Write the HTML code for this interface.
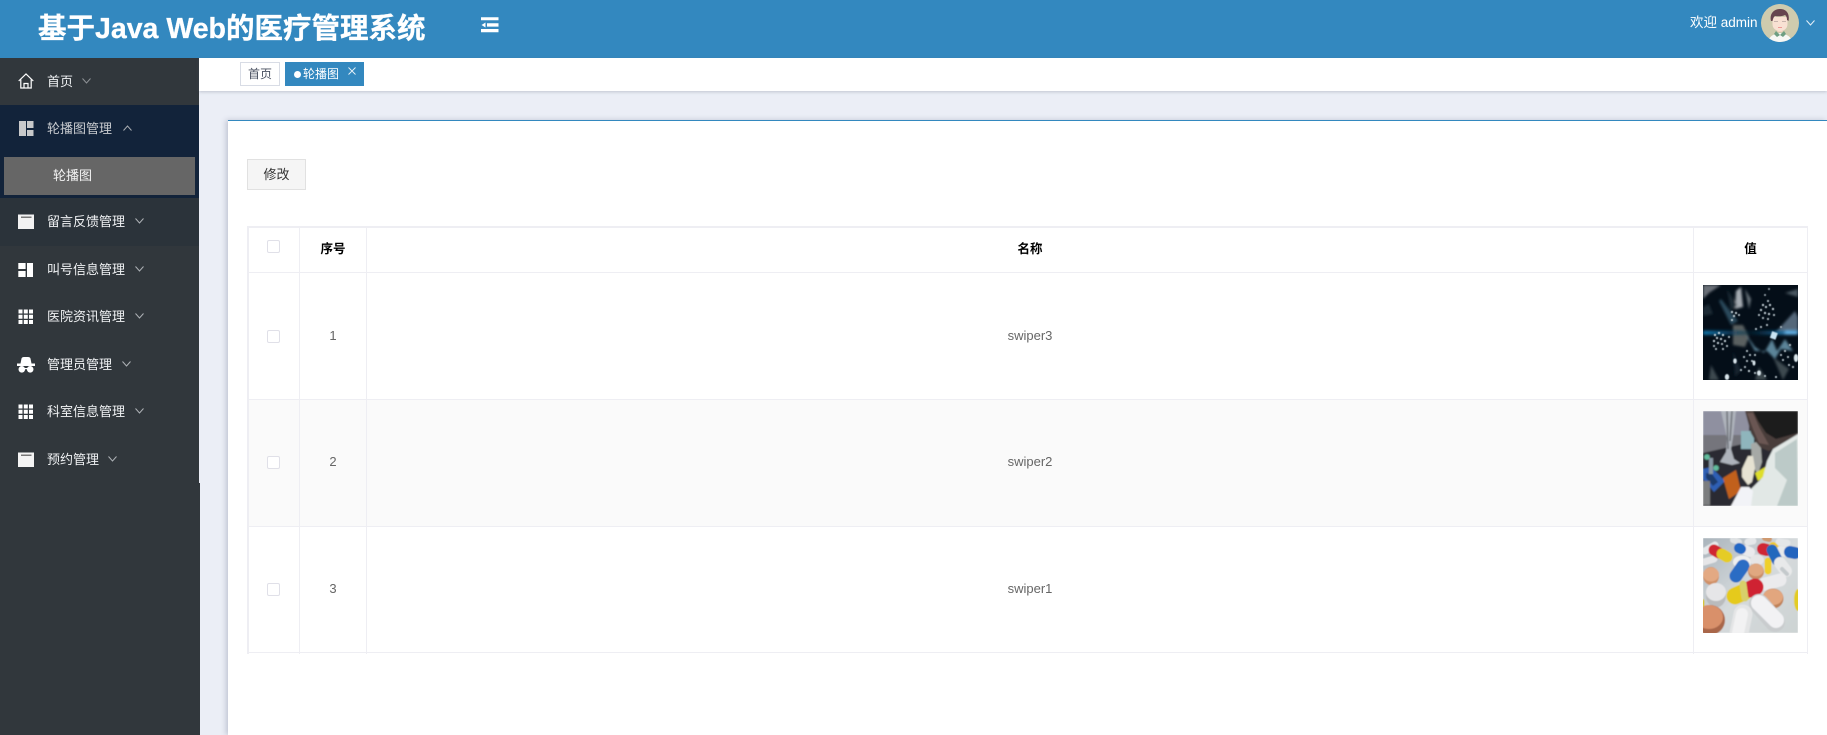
<!DOCTYPE html>
<html lang="zh-CN">
<head>
<meta charset="utf-8">
<title>基于Java Web的医疗管理系统</title>
<style>
*{box-sizing:border-box;margin:0;padding:0}
html,body{width:1827px;height:735px;overflow:hidden;background:#ebeef6;font-family:"Liberation Sans","Noto Sans CJK SC",sans-serif;font-size:13px;position:relative}
.a{position:absolute}
#hd{left:0;top:0;width:1827px;height:58px;background:#3388bf}
#title{left:38px;top:9px;font-size:28.5px;line-height:40px;font-weight:700;color:#fff;white-space:nowrap;-webkit-text-stroke:.3px #fff}
#side{left:0;top:58px;width:199px;height:425px;background:#31373c}
#side2{left:0;top:483px;width:200px;height:252px;background:#31373c}
.m{left:47px;color:#f0f2f4;font-size:13px;line-height:18px;white-space:nowrap}
.ic{left:18px;width:16px;height:16px}
.ar{width:9px;height:6px}
#tabs{left:199px;top:58px;width:1628px;height:33px;background:#fff;box-shadow:0 1px 3px rgba(90,100,120,.3)}
.tab{top:62px;height:24px;line-height:25px;font-size:12px;white-space:nowrap}
#card{left:228px;top:120px;width:1599px;height:615px;background:#fff;border-top:1px solid #3388bf;box-shadow:-2px 0 5px rgba(90,100,130,.3)}
#btn{left:247px;top:159px;width:59px;height:31px;background:#f5f5f5;border:1px solid #e1e1e1;color:#333;line-height:30px;text-align:center;font-size:13px}
.hl{background:#eeeef3}
.cb{left:267px;width:13px;height:13px;border:1px solid #e0e0e8;border-radius:2px;background:#fff}
.th{color:#000;font-weight:700;font-size:12.5px;line-height:18px;text-align:center}
.td{color:#666;font-size:13px;line-height:18px;text-align:center}
</style>
</head>
<body>
<div class="a" id="hd"></div>
<div class="a" id="title">基于Java Web的医疗管理系统</div>
<svg class="a" style="left:481px;top:17px" width="18" height="16" viewBox="0 0 18 16"><path d="M0 .3h17.500v3H0zM0 12h17.500v3.300H0zM6 6.300h11.500v3.300H6z" fill="#fff"/><path d="M.5 8L4.500 5.500v5z" fill="#fff"/></svg>
<div class="a" style="left:1690px;top:14px;color:#fff;font-size:13.5px;line-height:18px;white-space:nowrap">欢迎 admin</div>
<svg class="a" style="left:1761px;top:4px" width="38" height="38" viewBox="0 0 38 38">
<defs><clipPath id="cc"><circle cx="19" cy="19" r="19"/></clipPath></defs>
<g clip-path="url(#cc)"><rect width="38" height="38" fill="#cfcbae"/>
<path d="M7 38c1-6 6-8 12-9 6 1 11 3 12 9z" fill="#f7f7f4"/>
<path d="M15 27l4 4 4-4 2 3-3 3-3-2-3 2-3-3z" fill="#6f9e82"/>
<rect x="16.500" y="22" width="5" height="6" fill="#f4d3c0"/>
<path d="M11.500 13h15v7c0 5-4 7-7.500 7s-7.500-2-7.500-7z" fill="#f9e1d3"/>
<path d="M10 17c-2-8 4-12 9-12 6 0 10 4 8.500 12l-1.500-1c0-2-.5-4-2-5-3 1.500-7 1.500-10 1-1.500 1-2 3-2.500 5z" fill="#66454f"/>
<path d="M13 17.500h4M21 17.500h4" stroke="#c8b4ac" stroke-width="1"/><path d="M17 23.500h4" stroke="#ec9a96" stroke-width="1"/></g></svg>
<svg class="a ar" style="left:1806px;top:20px" viewBox="0 0 9 6"><path d="M.5.5L4.500 5 8.500.5" fill="none" stroke="#e6f0f8" stroke-width="1"/></svg>

<div class="a" id="side"></div><div class="a" id="side2"></div>
<div class="a" style="left:0;top:105px;width:199px;height:93px;background:#12233a"></div>
<div class="a" style="left:0;top:198px;width:199px;height:48px;background:#2b333a"></div>
<div class="a" style="left:4px;top:157px;width:191px;height:38px;background:#666"></div>

<svg class="a ic" style="top:73px" viewBox="0 0 16 16"><path d="M.7 8L8 1l7.300 7M2.800 6.500V15h10.400V6.500M6 15v-4.500h4V15" fill="none" stroke="#fff" stroke-width="1.200"/></svg>
<div class="a m" style="top:73px">首页</div>
<svg class="a ar" style="left:82px;top:78px" viewBox="0 0 9 6"><path d="M.5.5L4.500 5 8.500.5" fill="none" stroke="#8e9296"/></svg>

<svg class="a ic" style="top:121px" viewBox="0 0 16 16"><path d="M1 0h7v15H1zM9 0h6.500v7H9zM9 9h6.500v6H9z" fill="#c8c9ca"/></svg>
<div class="a m" style="top:120px;color:#c9ccd0">轮播图管理</div>
<svg class="a ar" style="left:123px;top:125px" viewBox="0 0 9 6"><path d="M.5 5.500L4.500 1l4 4.500" fill="none" stroke="#a9adb2"/></svg>
<div class="a m" style="left:53px;top:167px;color:#f4f4f4">轮播图</div>

<svg class="a ic" style="top:214px" viewBox="0 0 16 16"><rect width="16.500" height="14.500" y=".5" fill="#f2f2f2"/><rect x="3" y="2.500" width="10.500" height="1.500" fill="#777"/></svg>
<div class="a m" style="top:213px">留言反馈管理</div>
<svg class="a ar" style="left:135px;top:218px" viewBox="0 0 9 6"><path d="M.5.5L4.500 5 8.500.5" fill="none" stroke="#aeb2b6"/></svg>

<svg class="a ic" style="top:263px" viewBox="0 0 16 16"><path d="M.3 0h7.300v6H.3zM.3 8h7.300v6H.3zM9 0h6v14H9z" fill="#fff"/></svg>
<div class="a m" style="top:261px">叫号信息管理</div>
<svg class="a ar" style="left:135px;top:266px" viewBox="0 0 9 6"><path d="M.5.5L4.500 5 8.500.5" fill="none" stroke="#aeb2b6"/></svg>

<svg class="a ic" style="top:309px" viewBox="0 0 16 16"><path d="M.5.500h4v4h-4zM5.800.5h4v4h-4zM11 .5h4v4h-4zM.5 5.700h4v4h-4zM5.800 5.700h4v4h-4zM11 5.700h4v4h-4zM.5 11h4v4h-4zM5.800 11h4v4h-4zM11 11h4v4h-4z" fill="#fff"/></svg>
<div class="a m" style="top:308px">医院资讯管理</div>
<svg class="a ar" style="left:135px;top:313px" viewBox="0 0 9 6"><path d="M.5.5L4.500 5 8.500.5" fill="none" stroke="#aeb2b6"/></svg>

<svg class="a ic" style="top:357px;left:17px;width:18px" viewBox="0 0 18 16"><path d="M3.500 6.500L4.500 1.500Q5 0 7 0h4q2 0 2.500 1.500l1 5zM0 6.500h18V9H0z" fill="#fff"/><circle cx="4.800" cy="12.300" r="3.300" fill="#fff"/><circle cx="13.200" cy="12.300" r="3.300" fill="#fff"/><path d="M7 11h4v1.200H7z" fill="#fff"/></svg>
<div class="a m" style="top:356px">管理员管理</div>
<svg class="a ar" style="left:122px;top:361px" viewBox="0 0 9 6"><path d="M.5.5L4.500 5 8.500.5" fill="none" stroke="#aeb2b6"/></svg>

<svg class="a ic" style="top:404px" viewBox="0 0 16 16"><path d="M.5.500h4v4h-4zM5.800.5h4v4h-4zM11 .5h4v4h-4zM.5 5.700h4v4h-4zM5.800 5.700h4v4h-4zM11 5.700h4v4h-4zM.5 11h4v4h-4zM5.800 11h4v4h-4zM11 11h4v4h-4z" fill="#fff"/></svg>
<div class="a m" style="top:403px">科室信息管理</div>
<svg class="a ar" style="left:135px;top:408px" viewBox="0 0 9 6"><path d="M.5.5L4.500 5 8.500.5" fill="none" stroke="#aeb2b6"/></svg>

<svg class="a ic" style="top:452px" viewBox="0 0 16 16"><rect width="16.500" height="14.500" y=".5" fill="#f4f4f4"/><rect x="3" y="2.500" width="10.500" height="1.500" fill="#777"/></svg>
<div class="a m" style="top:451px">预约管理</div>
<svg class="a ar" style="left:108px;top:456px" viewBox="0 0 9 6"><path d="M.5.5L4.500 5 8.500.5" fill="none" stroke="#aeb2b6"/></svg>

<div class="a" id="tabs"></div>
<div class="a tab" style="left:240px;width:40px;background:#fff;border:1px solid #d8dce5;color:#495060;text-align:center;line-height:23px">首页</div>
<div class="a tab" style="left:285px;width:79px;background:#3388bf;color:#fff;padding-left:9px"><span style="display:inline-block;width:7px;height:7px;border-radius:50%;background:#fff;vertical-align:0;margin-right:2px"></span>轮播图</div>
<svg class="a" style="left:348px;top:67px" width="8" height="8" viewBox="0 0 8 8"><path d="M.5.5l7 7M7.500.5l-7 7" stroke="#e8f2f8" stroke-width=".9"/></svg>

<div class="a" id="card"></div>
<div class="a" id="btn">修改</div>

<div class="a" style="left:249px;top:400px;width:1558px;height:127px;background:#fafafa"></div>
<div class="a hl" style="left:247px;top:226px;width:1561px;height:2px"></div>
<div class="a hl" style="left:247px;top:226px;width:2px;height:428px"></div>
<div class="a hl" style="left:299px;top:226px;width:1px;height:428px"></div>
<div class="a hl" style="left:366px;top:226px;width:1px;height:428px"></div>
<div class="a hl" style="left:1693px;top:226px;width:1px;height:428px"></div>
<div class="a hl" style="left:1807px;top:226px;width:1px;height:428px"></div>
<div class="a hl" style="left:247px;top:272px;width:1561px;height:1px"></div>
<div class="a hl" style="left:247px;top:399px;width:1561px;height:1px"></div>
<div class="a hl" style="left:247px;top:526px;width:1561px;height:1px"></div>
<div class="a hl" style="left:247px;top:652px;width:1561px;height:1px"></div>

<div class="a cb" style="top:240px"></div>
<div class="a cb" style="top:330px"></div>
<div class="a cb" style="top:456px"></div>
<div class="a cb" style="top:583px"></div>

<div class="a th" style="left:300px;top:240px;width:66px">序号</div>
<div class="a th" style="left:367px;top:240px;width:1326px">名称</div>
<div class="a th" style="left:1694px;top:240px;width:113px">值</div>

<div class="a td" style="left:300px;top:327px;width:66px">1</div>
<div class="a td" style="left:367px;top:327px;width:1326px">swiper3</div>
<div class="a td" style="left:300px;top:453px;width:66px">2</div>
<div class="a td" style="left:367px;top:453px;width:1326px">swiper2</div>
<div class="a td" style="left:300px;top:580px;width:66px">3</div>
<div class="a td" style="left:367px;top:580px;width:1326px">swiper1</div>

<!-- image 1 -->
<svg class="a" style="left:1703px;top:285px" width="95" height="95" viewBox="0 0 95 95">
<defs>
<filter id="b1" x="-20%" y="-20%" width="140%" height="140%"><feGaussianBlur stdDeviation=".5"/></filter>
<filter id="b2" x="-20%" y="-20%" width="140%" height="140%"><feGaussianBlur stdDeviation="1.300"/></filter>
<filter id="b5" x="-20%" y="-200%" width="140%" height="500%"><feGaussianBlur stdDeviation="1.500"/></filter>
<linearGradient id="fl" x1="0" x2="1"><stop offset="0" stop-color="#1c90d0"/><stop offset=".2" stop-color="#0c5a88"/><stop offset=".5" stop-color="#06283c" stop-opacity=".5"/><stop offset=".75" stop-color="#0e5a88"/><stop offset="1" stop-color="#49b6ff"/></linearGradient>
</defs>
<rect width="95" height="95" fill="#040e18"/>
<g filter="url(#b2)">
<path d="M0 0h18L6 8 0 14z" fill="#6a7078"/><path d="M33 6l5-4 2 20-8 2z" fill="#a6acb2"/><path d="M42 4l6 10-2 10z" fill="#6a747c"/>
<path d="M0 22l6-3 4 10-10 2z" fill="#1a2a34"/><path d="M82 8l13-4v8z" fill="#4a5660"/><path d="M72 48l20-22 3 6v14z" fill="#55687a"/>
<path d="M16 16l12 24 7-4-17-22z" fill="#2a4a5c"/><path d="M24 4l4 22 6-6z" fill="#1a2a36"/>
<path d="M30 40h10l6 12-4 10-12-2z" fill="#5a6060"/>
<path d="M42 48l10 14 9 6 8-14 5 12 8-12 8 12-12-2-6 10-8-8-12 0z" fill="#5b8499"/>
<path d="M8 80l8 15H6zM56 82l8 13H52zM70 72l16 12-6 11z" fill="#3c4850"/>
<path d="M30 66l8 20-6 6z" fill="#12222e"/>
</g>
<g filter="url(#b5)"><rect x="0" y="46" width="95" height="3.500" fill="url(#fl)"/><rect x="82" y="45.500" width="13" height="4" fill="#6cc4ff"/></g>
<rect x="68" y="47" width="6" height="7" fill="#c9e4f2" filter="url(#b1)" transform="rotate(20 71 50)"/>
<g fill="#d8e4ea" filter="url(#b1)">
<circle cx="12" cy="50" r="1.100"/><circle cx="16" cy="48" r="1.100"/><circle cx="20" cy="50" r="1.100"/><circle cx="14" cy="53" r="1.100"/><circle cx="18" cy="54" r="1.100"/><circle cx="22" cy="56" r="1.100"/><circle cx="11" cy="56" r="1.100"/><circle cx="15" cy="58" r="1.100"/><circle cx="19" cy="59" r="1"/><circle cx="11" cy="61" r="1"/><circle cx="24" cy="61" r="1"/><circle cx="13" cy="64" r="1"/><circle cx="20" cy="64" r="1"/><circle cx="26" cy="52" r="1"/>
<circle cx="29" cy="27" r="1.100"/><circle cx="33" cy="28" r="1.100"/><circle cx="31" cy="31" r="1.100"/><circle cx="36" cy="30" r="1"/><circle cx="29" cy="35" r="1"/>
<circle cx="62" cy="10" r=".9"/><circle cx="66" cy="4" r=".9"/><circle cx="65" cy="16" r="1"/><circle cx="60" cy="20" r="1.100"/><circle cx="63" cy="22" r="1.100"/><circle cx="67" cy="20" r="1.100"/><circle cx="70" cy="24" r="1.100"/><circle cx="58" cy="25" r="1.100"/><circle cx="62" cy="28" r="1.100"/><circle cx="66" cy="29" r="1.100"/><circle cx="71" cy="30" r="1"/><circle cx="60" cy="33" r="1"/><circle cx="65" cy="34" r="1"/><circle cx="56" cy="30" r="1"/><circle cx="53" cy="44" r="1"/><circle cx="58" cy="42" r="1"/><circle cx="64" cy="40" r="1"/><circle cx="78" cy="42" r=".9"/>
<circle cx="44" cy="66" r="1"/><circle cx="47" cy="70" r="1"/><circle cx="41" cy="72" r="1"/><circle cx="52" cy="70" r="1"/><circle cx="44" cy="76" r="1"/><circle cx="49" cy="76" r="1"/><circle cx="42" cy="82" r="1"/><circle cx="46" cy="86" r="1.100"/><circle cx="38" cy="85" r="1"/><circle cx="52" cy="88" r="1"/><circle cx="62" cy="91" r="1"/>
<ellipse cx="32" cy="76" rx="1.800" ry="2.600"/><ellipse cx="51" cy="78" rx="1.500" ry="2.600"/><ellipse cx="56" cy="88" rx="2" ry="2.600"/><ellipse cx="24" cy="92" rx="2.200" ry="3"/><ellipse cx="93" cy="73" rx="2.200" ry="4"/>
<circle cx="78" cy="70" r="1"/><circle cx="82" cy="66" r="1"/><circle cx="85" cy="72" r="1"/><circle cx="80" cy="75" r="1"/><circle cx="87" cy="60" r="1"/><circle cx="86" cy="80" r="1"/><circle cx="73" cy="92" r="1"/><circle cx="90" cy="82" r="1"/>
</g></svg>

<!-- image 2 -->
<svg class="a" style="left:1703px;top:411px" width="95" height="95" viewBox="0 0 95 95">
<defs><filter id="b3" x="-10%" y="-10%" width="120%" height="120%"><feGaussianBlur stdDeviation=".9"/></filter><clipPath id="c2"><rect width="95" height="95"/></clipPath></defs>
<g clip-path="url(#c2)"><g filter="url(#b3)">
<rect width="95" height="95" fill="#2a2c33"/>
<path d="M0 0h46v28L0 42z" fill="#8f90a0"/><path d="M0 24h44v8L0 42z" fill="#74757c"/>
<path d="M18 0h15l-3 26-2 12 3 10 6 4-8 2-12-3 6-10 1-14z" fill="#aeb3bb"/><path d="M24 0l1 38M29 0l-2 30" stroke="#6c6f76" stroke-width="1.500" fill="none"/>
<path d="M38 20h13v18H38z" fill="#8fb5bc"/>
<path d="M42 0h53v23L66 40l-10-4-8-14z" fill="#4a3c3a"/><path d="M50 0h45v22l-22 6-10-6-8-12z" fill="#1f1b1a"/><path d="M44 2l6 16 6 14 10 2-10-18-6-14z" fill="#6a5652"/>
<path d="M48 33l5-2 5 6 1 14-4 12-6-8z" fill="#a6a9a6"/>
<path d="M0 58l8-2 14 14-11 11L0 68z" fill="#2f5fb4"/><path d="M3 62l6 1 6 8-5 4-7-8z" fill="#1d3a6c"/>
<circle cx="4" cy="46" r="2.800" fill="#63bd9e"/><circle cx="13" cy="57" r="2.800" fill="#62bb9c"/><path d="M6 47h4v16H6z" fill="#8a9aa6"/>
<path d="M0 70h7v24H0z" fill="#7c7d7e"/>
<path d="M20 67l13-8 5 21-12 8z" fill="#c1611f"/>
<path d="M52 62l12-7 2 8-11 7z" fill="#dede2c"/>
<path d="M39 58l6-13 5 0 2 12-3 14-4 3-6-8z" fill="#e6e2d2"/>
<path d="M95 23L70 38l-6 12-4 16-12 12-6-2-14 19h67z" fill="#e2e8e6"/><path d="M72 42l22-14 1 67H74l10-26-12-12z" fill="#bccac8"/><path d="M38 76l8 0 4 4-2 15H28z" fill="#f2f3f7"/>
</g></g></svg>

<!-- image 3 -->
<svg class="a" style="left:1703px;top:538px" width="95" height="95" viewBox="0 0 95 95">
<defs><filter id="b4" x="-10%" y="-10%" width="120%" height="120%"><feGaussianBlur stdDeviation=".6"/></filter><linearGradient id="bg3" x1="0" y1="0" x2="1" y2="1"><stop offset="0" stop-color="#aab4bc"/><stop offset=".5" stop-color="#d5dadc"/><stop offset="1" stop-color="#cdd3d3"/></linearGradient><clipPath id="c3"><rect width="95" height="95"/></clipPath></defs>
<g clip-path="url(#c3)"><g filter="url(#b4)" fill="none" stroke-linecap="round">
<rect width="95" height="95" fill="url(#bg3)"/>
<path d="M2 13L12 7" stroke="#e6e8ea" stroke-width="7"/><path d="M1 24L11 21" stroke="#e6e6e8" stroke-width="7"/>
<path d="M45 4L50 3" stroke="#e6e8ea" stroke-width="7"/><path d="M62 0L66 1" stroke="#cf9a70" stroke-width="6"/><path d="M76 4L84 5" stroke="#e4e6e8" stroke-width="7"/>
<path d="M30 2L36 4" stroke="#dfe2e4" stroke-width="6"/>
<path d="M11 12L16 15" stroke="#d02632" stroke-width="11"/><path d="M19 16L24 19" stroke="#e5cc28" stroke-width="11"/>
<path d="M42 12L47 14" stroke="#eaeaec" stroke-width="10"/><path d="M36 10L38 11" stroke="#2268c4" stroke-width="10"/>
<ellipse cx="39" cy="24" rx="9" ry="6.500" fill="#eeefef"/><ellipse cx="54" cy="22" rx="7" ry="5.500" fill="#e6e6e6"/>
<path d="M60 11L64 12" stroke="#cf2534" stroke-width="12"/><path d="M70 8L72 10" stroke="#efc927" stroke-width="8"/><path d="M65 23L65 33" stroke="#efd02a" stroke-width="7"/>
<path d="M78 13L84 14" stroke="#e8e9ea" stroke-width="10"/><path d="M87 14L92 15" stroke="#2163be" stroke-width="12"/>
<path d="M69 12L74 22" stroke="#2068bd" stroke-width="11"/><path d="M77 25L83 33" stroke="#e8e9ea" stroke-width="12"/><path d="M79 31L84 36" stroke="#c4c9cc" stroke-width="4"/>
<path d="M40 28L33 38" stroke="#2a6cc4" stroke-width="13"/>
<ellipse cx="8" cy="38" rx="8" ry="9" fill="#cf9168"/><ellipse cx="8" cy="36.500" rx="8" ry="7" fill="#e3a983"/>
<ellipse cx="53" cy="33.500" rx="8" ry="8" fill="#c98e66"/><ellipse cx="53" cy="32" rx="7.500" ry="6.200" fill="#e0a880"/>
<path d="M62 46L77 42" stroke="#ebebed" stroke-width="13"/>
<ellipse cx="13" cy="57.500" rx="10" ry="12" fill="#b9bbbd"/><ellipse cx="13" cy="54" rx="10" ry="9" fill="#e6e6e8"/>
<path d="M32 58L41 54" stroke="#e5ca1f" stroke-width="17"/><path d="M48 51L52 49" stroke="#cf2233" stroke-width="17"/><path d="M40 46l2 14" stroke="#d8d06a" stroke-width="7"/>
<ellipse cx="70" cy="60.500" rx="10.500" ry="10" fill="#c08258"/><ellipse cx="70" cy="59" rx="10" ry="8" fill="#e2a67e"/>
<path d="M56 66L72 84" stroke="#c9ccce" stroke-width="20"/><path d="M56 65L73 82" stroke="#f2f2f4" stroke-width="16"/>
<ellipse cx="7" cy="82" rx="15" ry="15" fill="#a9664a"/><ellipse cx="6" cy="79" rx="14" ry="12" fill="#d9906a"/>
<path d="M40 76L35 100" stroke="#e4e5e6" stroke-width="19"/><path d="M39 76L34 100" stroke="#f2f2f3" stroke-width="12"/>
<ellipse cx="95" cy="62" rx="4" ry="11" fill="#e3cc20"/><ellipse cx="0" cy="65" rx="1.500" ry="4" fill="#d8c528"/>
</g></g></svg>
</body>
</html>
